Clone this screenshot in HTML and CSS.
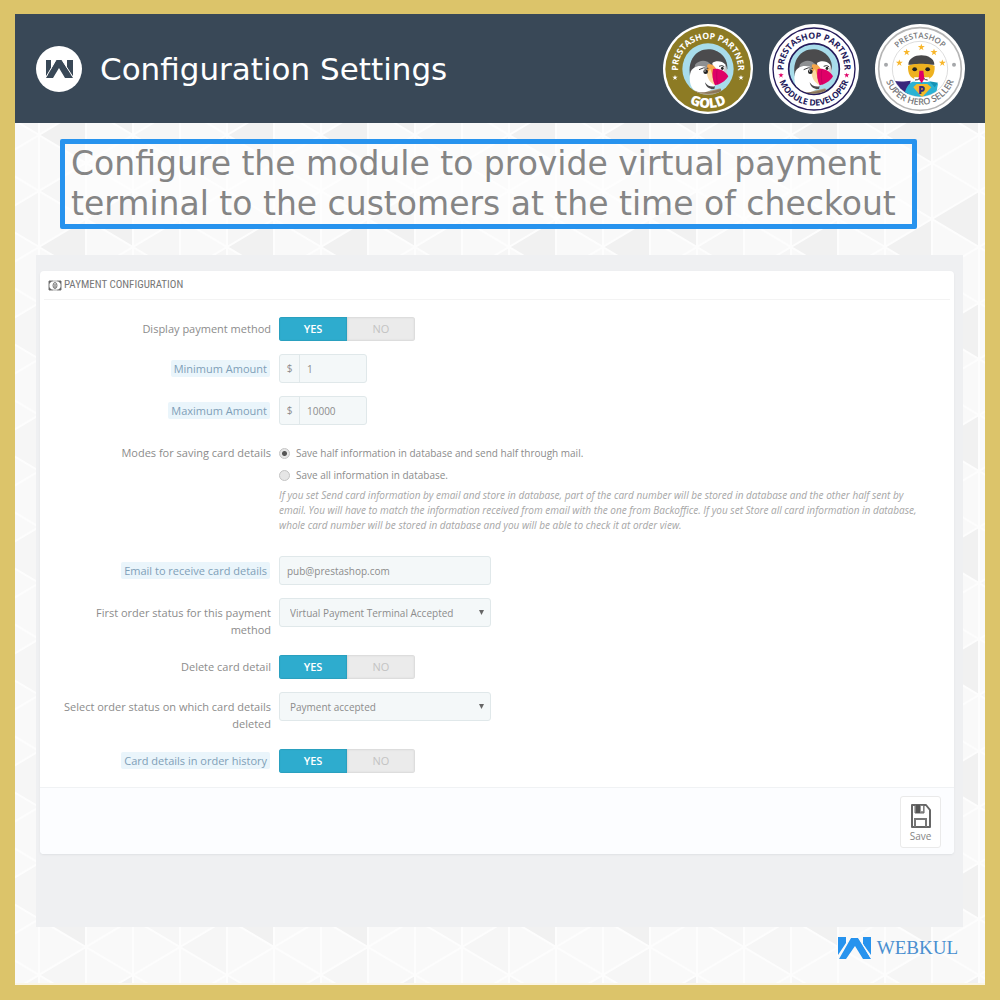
FILE: index.html
```html
<!DOCTYPE html>
<html lang="en">
<head>
<meta charset="utf-8">
<meta name="viewport" content="width=device-width, initial-scale=1">
<title>Configuration Settings</title>
<link rel="stylesheet" href="styles.css">
</head>
<body>
<div class="frame">
  <header class="topbar">
    <svg class="topbar-logo" viewBox="0 0 46 46" aria-hidden="true">
      <circle cx="23" cy="23" r="23" fill="#fff"/>
      <path d="M10 14h5v10l-5 7zM31 14h6v17l-6-8zM10 32l10-18h6l11 18h-8l-6-10-6 10z" fill="#394857"/>
      <path d="M10 31L20 14M37 31L26 14" stroke="#fff" stroke-width="1"/>
    </svg>
    <h1 class="topbar-title">Configuration Settings</h1>
    <div class="badges">
      <svg class="badge" viewBox="8 11 270 270" role="img" aria-label="PrestaShop Partner Gold">
        <defs>
          <path id="gold-top" d="M53 156V146a90 90 0 0 1 180 0V156"/>
          <path id="gold-bottom" d="M26 146a117 117 0 0 0 234 0"/>
          <clipPath id="gold-clip"><circle cx="143" cy="146" r="77"/></clipPath>
          <path id="star" d="M0-8l2 5 6 0-5 4 2 6-5-4-5 4 2-6-5-4 6 0z"/>
          <g id="puffin">
            <path d="M104 205l39 8 38-9 5 26h-86z" fill="#b09a7c"/>
            <path d="M104 207l40 9 38-10-1 9-37 5-40-5z" fill="#897559"/>
            <path d="M89 166c-8-46 18-79 55-79 32 0 58 24 57 58l-13 25-40 20-50 5z" fill="#4b4b4d"/>
            <path d="M105 132c14-16 36-14 48 2l-4 24-50-4z" fill="#8e9092"/>
            <path d="M156 128c8-8 30-8 38 4 6 12 2 32-6 46l-28-16z" fill="#fff"/>
            <path d="M196 134c7 12 4 31-4 40l-4-18z" fill="#c9cbcd"/>
            <path d="M90 158c6-22 34-26 54-14l20 50c-12 24-46 28-64 14-12-12-14-32-10-50z" fill="#fff"/>
            <path d="M134 186c6 10 16 14 30 12l-2 8c-14 2-26-6-28-20z" fill="#4b4b4d"/>
            <path d="M141 133c10-4 22 2 27 14l-2 48c-8-10-31-24-25-62z" fill="#f5a64a"/>
            <path d="M150 146c6 14 8 32 14 48-14-6-24-20-24-36z" fill="#fbd9a0"/>
            <path d="M158 146c16-3 36 4 46 22-10 16-24 24-40 27-7-14-10-32-6-49z" fill="#df0067"/>
            <path d="M170 150c-2 14-1 28 2 42" stroke="#b8005a" stroke-width="2" fill="none"/>
            <path d="M116 148q14-9 28-4M176 138q9-5 16 1" stroke="#3a3a3c" stroke-width="3" fill="none"/>
            <circle cx="136" cy="154" r="7" fill="#222"/><circle cx="134" cy="152" r="2" fill="#fff"/>
            <ellipse cx="186" cy="144" rx="4" ry="5" fill="#222"/>
          </g>
        </defs>
        <circle cx="143" cy="146" r="135" fill="#fff"/>
        <circle cx="143" cy="146" r="128" fill="#8d7b24"/>
        <circle cx="143" cy="146" r="77" fill="#a8dcea"/>
        <g clip-path="url(#gold-clip)"><use href="#puffin"/></g>
        <text class="ring ring-gold" text-anchor="middle"><textPath href="#gold-top" startOffset="50%">PRESTASHOP PARTNER</textPath></text>
        <text class="ring ring-gold-large" text-anchor="middle"><textPath href="#gold-bottom" startOffset="50%">GOLD</textPath></text>
        <use href="#star" x="44" y="172" fill="#fff"/><use href="#star" x="242" y="172" fill="#fff"/>
      </svg>
      <svg class="badge" viewBox="12 11 270 270" role="img" aria-label="PrestaShop Partner Module Developer">
        <defs>
          <path id="dev-top" d="M56 156V146a91 91 0 0 1 182 0V156"/>
          <path id="dev-bottom" d="M37 146a110 110 0 0 0 220 0"/>
          <clipPath id="dev-clip"><circle cx="147" cy="146" r="74"/></clipPath>
        </defs>
        <circle cx="147" cy="146" r="135" fill="#fff"/>
        <circle cx="147" cy="146" r="123" fill="none" stroke="#251b5b" stroke-width="4"/>
        <circle cx="147" cy="146" r="76" fill="#a8dcea" stroke="#251b5b" stroke-width="5"/>
        <g clip-path="url(#dev-clip)"><use href="#puffin"/></g>
        <text class="ring ring-dev" text-anchor="middle"><textPath href="#dev-top" startOffset="50%">PRESTASHOP PARTNER</textPath></text>
        <text class="ring ring-dev" text-anchor="middle"><textPath href="#dev-bottom" startOffset="50%">MODULE DEVELOPER</textPath></text>
        <use href="#star" x="48" y="165" fill="#df0067"/><use href="#star" x="245" y="165" fill="#df0067"/>
      </svg>
      <svg class="badge" viewBox="15 12 270 270" role="img" aria-label="PrestaShop Super Hero Seller">
        <defs>
          <path id="hero-top" d="M58 147a92 92 0 0 1 184 0"/>
          <path id="hero-bottom" d="M42 147a108 108 0 0 0 216 0"/>
          <clipPath id="hero-clip"><circle cx="150" cy="147" r="83"/></clipPath>
        </defs>
        <circle cx="150" cy="147" r="135" fill="#fff"/>
        <circle cx="150" cy="147" r="124" fill="none" stroke="#b5b5b5" stroke-width="5"/>
        <circle cx="150" cy="147" r="83" fill="#fff" stroke="#ccc" stroke-width="2"/>
        <g clip-path="url(#hero-clip)">
          <path d="M70 182c20 4 38 2 52 0l-10 50H80z" fill="#39277c"/>
          <path d="M102 235c2-28 12-44 26-50h50l26 6-8 44z" fill="#2bb2d4"/>
          <path d="M178 184l26 4-10 14z" fill="#1592b5"/>
          <path d="M115 134c0-38 78-38 78 0z" fill="#48484a"/>
          <path d="M114 138c12-9 66-9 80 0 1 24-8 36-22 40h-36c-14-4-23-16-22-40z" fill="#eeb11f"/>
          <path d="M132 172h46l-4 14h-38z" fill="#fff"/>
          <path d="M130 202l10-10h32l12 10-28 30z" fill="#f5b92b"/>
          <path d="M148 152h12l3 24-8 14-9-14z" fill="#df0067"/>
          <ellipse cx="134" cy="148" rx="7" ry="6" fill="#222"/><ellipse cx="173" cy="148" rx="7" ry="6" fill="#222"/>
          <path d="M135 180q10 0 13-4M162 176q4 4 11 4" fill="none" stroke="#333" stroke-width="3"/>
        </g>
        <text class="hero-letter" x="155" y="221" text-anchor="middle">P</text>
        <g fill="#f8b62b">
          <use href="#star" transform="translate(154 82) scale(1.3)"/>
          <use href="#star" transform="translate(110 97) scale(1.3)"/>
          <use href="#star" transform="translate(192 97) scale(1.3)"/>
          <use href="#star" transform="translate(88 129) scale(1.3)"/>
          <use href="#star" transform="translate(217 129) scale(1.3)"/>
        </g>
        <circle cx="48" cy="134" r="6" fill="#a6a8ab"/><circle cx="252" cy="134" r="6" fill="#a6a8ab"/>
        <text class="ring ring-hero" text-anchor="middle"><textPath href="#hero-top" startOffset="50%">PRESTASHOP</textPath></text>
        <text class="ring ring-hero ring-hero-large" text-anchor="middle"><textPath href="#hero-bottom" startOffset="50%">SUPER HERO SELLER</textPath></text>
      </svg>
    </div>
  </header>

  <main class="content">
    <p class="intro">Configure the module to provide virtual payment<br>terminal to the customers at the time of checkout</p>

    <section class="backdrop">
      <form class="panel">
        <h2 class="panel-title">
          <svg class="money-icon" viewBox="0 0 14 11" aria-hidden="true">
            <path d="M5 1H1v3M1 7v3h4M9 1h4v3M13 7v3H9M1 4v3M13 4v3" fill="none" stroke="#777" stroke-width="1"/>
            <path d="M5 1h4M5 10h4" stroke="#aaa"/>
            <path d="M1 1h3L1 4zM13 1h-3l3 3zM1 10h3L1 7zM13 10h-3l3-3z" fill="#666"/>
            <ellipse cx="7" cy="5.500" rx="2" ry="3" fill="#ddd" stroke="#777" stroke-width="1"/>
            <path d="M7 4v4" fill="none" stroke="#777" stroke-width="1"/>
          </svg>PAYMENT CONFIGURATION</h2>

        <div class="fields">
          <div class="row row-switch">
            <div class="label" id="l-display">Display payment method</div>
            <div class="switch" role="radiogroup" aria-labelledby="l-display">
              <label><input type="radio" name="display" checked><span>YES</span></label>
              <label><input type="radio" name="display"><span>NO</span></label>
            </div>
          </div>
          <div class="row">
            <label class="label" for="min"><span class="hint">Minimum Amount</span></label>
            <div class="money"><span>$</span><input type="text" id="min" value="1"></div>
          </div>
          <div class="row">
            <label class="label" for="max"><span class="hint">Maximum Amount</span></label>
            <div class="money"><span>$</span><input type="text" id="max" value="10000"></div>
          </div>
          <div class="row row-modes">
            <div class="label" id="l-modes">Modes for saving card details</div>
            <div class="modes" role="radiogroup" aria-labelledby="l-modes">
              <label class="mode"><input type="radio" name="mode" checked>Save half information in database and send half through mail.</label>
              <label class="mode"><input type="radio" name="mode">Save all information in database.</label>
              <p class="help">If you set Send card information by email and store in database, part of the card number will be stored in database and the other half sent by email. You will have to match the information received from email with the one from Backoffice. If you set Store all card information in database, whole card number will be stored in database and you will be able to check it at order view.</p>
            </div>
          </div>
          <div class="row">
            <label class="label" for="email"><span class="hint">Email to receive card details</span></label>
            <input class="control" type="text" id="email" value="pub@prestashop.com">
          </div>
          <div class="row">
            <label class="label" for="first">First order status for this payment method</label>
            <select class="control" id="first"><option>Virtual Payment Terminal Accepted</option></select>
          </div>
          <div class="row row-switch">
            <div class="label" id="l-delete">Delete card detail</div>
            <div class="switch" role="radiogroup" aria-labelledby="l-delete">
              <label><input type="radio" name="delete" checked><span>YES</span></label>
              <label><input type="radio" name="delete"><span>NO</span></label>
            </div>
          </div>
          <div class="row">
            <label class="label" for="deleted">Select order status on which card details deleted</label>
            <select class="control" id="deleted"><option>Payment accepted</option></select>
          </div>
          <div class="row row-switch">
            <div class="label" id="l-history"><span class="hint">Card details in order history</span></div>
            <div class="switch" role="radiogroup" aria-labelledby="l-history">
              <label><input type="radio" name="history" checked><span>YES</span></label>
              <label><input type="radio" name="history"><span>NO</span></label>
            </div>
          </div>
        </div>

        <div class="panel-footer">
          <button class="save" type="button">
            <svg viewBox="0 0 22 24" aria-hidden="true">
              <path d="M2 1h14l4 5v17H2z" fill="#fff" stroke="#666" stroke-width="2" stroke-linejoin="round"/>
              <path d="M5 1h9v8H5z" fill="#999" stroke="#666"/>
              <path d="M6 1h4v8H6z" fill="#555"/><path d="M11 2h2v5h-2z" fill="#fff"/>
              <path d="M5 23v-8h11v8" fill="none" stroke="#777" stroke-width="2"/>
            </svg>
            <span>Save</span>
          </button>
        </div>
      </form>
    </section>
  </main>

  <footer class="brand">
    <svg class="brand-mark" viewBox="0 0 33 22" aria-hidden="true">
      <path d="M0 0h8v6L0 18zM25 0h8v18l-8-11zM1 22L13 1h7l13 21h-8l-8-13-9 13z" fill="#2793ee"/>
      <path d="M0 21L12 1M33 21L21 1" stroke="#f8f8f8" stroke-width="1"/>
    </svg>
    <span>WEBKUL</span>
  </footer>
</div>
</body>
</html>
```
FILE: styles.css
```css
* { box-sizing: border-box; }

body {
  margin: 0;
  font-family: "Open Sans", "Noto Sans", sans-serif;
  font-size: 11px;
  color: #8c8c8c;
}

.frame {
  min-height: 100vh;
  display: flex;
  flex-direction: column;
  border: 15px solid #dcc46a;
  border-top-width: 14px;
  background-color: #f9f9f9;
  background-image: url("data:image/svg+xml,%3Csvg xmlns='http://www.w3.org/2000/svg' width='282' height='112'%3E%3Cg fill='%23f1f1f1'%3E%3Cpath d='M0 56L47 28V84zM188 56L235 28V84zM94 0L47 28L94 56z'/%3E%3C/g%3E%3Cg fill='%23f6f6f6'%3E%3Cpath d='M94 56L141 28V84zM235 28L188 0L188 56zM0 0L47 28V-28zM0 112L47 140V84zM141 84L188 56V112zM282 0L235 28L282 56z'/%3E%3C/g%3E%3Cpath d='M0 0L188 112M0 56L94 112M94 0L282 112M188 0L282 56M0 56L94 0M0 112L188 0M94 112L282 0M188 112L282 56M0 0V112M47 0V112M94 0V112M141 0V112M188 0V112M235 0V112M282 0V112' fill='none' stroke='%23fdfdfd' stroke-width='2'/%3E%3C/svg%3E");
  background-position: 24px 65px;
}

.topbar {
  display: flex;
  align-items: center;
  min-height: 109px;
  padding: 0 20px 0 21px;
  background: #394857;
}

.topbar-logo { width: 46px; height: 46px; flex: none; }

.topbar-title {
  flex: 1;
  margin: 0 0 0 18px;
  font: 400 31px/40px "DejaVu Sans", sans-serif;
  color: #fff;
}

.badges { display: flex; gap: 16px; }
.badge { width: 90px; height: 90px; }
.ring { font-family: "Open Sans", sans-serif; font-weight: 700; font-size: 26px; }
.ring-gold { fill: #fff; }
.ring-gold-large { fill: #fff; font-size: 41px; font-weight: 800; }
.ring-dev { fill: #251b5b; }
.ring-hero { fill: #77787b; font-weight: 600; font-size: 24px; }
.ring-hero-large { font-size: 27px; }
.hero-letter { font: 800 32px "Open Sans", sans-serif; fill: #39277c; }

.content { padding: 16px 22px 0 21px; }

.intro {
  width: fit-content;
  margin: 0 0 26px 24px;
  padding: 0 16px 0 6px;
  border: 5px solid #2793ee;
  border-radius: 2px;
  background: rgba(255, 255, 255, .5);
  font: 400 33px/40px "DejaVu Sans", sans-serif;
  color: #858585;
}

.backdrop {
  padding: 16px 9px 73px 4px;
  background: #eff0f2;
}

.panel {
  border-radius: 4px;
  background: #fff;
  box-shadow: 0 1px 2px #dfe1e4;
}

.panel-title {
  display: flex;
  align-items: center;
  gap: 2px;
  height: 29px;
  margin: 0 4px;
  padding: 0 4px;
  border-bottom: 1px solid #f3f3f3;
  font: 400 11px/28px "Liberation Sans Narrow", "Roboto Condensed", sans-serif;
  color: #777;
}

.money-icon { width: 14px; height: 11px; }

.fields {
  display: flex;
  flex-direction: column;
  gap: 13px;
  padding: 14px 24px 14px 20px;
}

.row {
  display: grid;
  grid-template-columns: 211px 1fr;
  gap: 8px;
  align-items: start;
}

.row-switch .switch { margin-top: 3px; }
.row-modes { padding-bottom: 10px; }

.label {
  padding: 6px 0 1px;
  line-height: 17px;
  text-align: right;
}

.hint {
  display: inline-block;
  padding: 0 3px;
  margin-right: 1px;
  border-radius: 2px;
  background: #eaf5fb;
  color: #7f9fb8;
}

.switch {
  display: flex;
  width: 136px;
  height: 24px;
  border-radius: 3px;
  overflow: hidden;
}

.switch label { flex: 1; position: relative; }
.switch input { position: absolute; inset: 0; margin: 0; opacity: 0; }
.switch span {
  display: block;
  height: 24px;
  line-height: 24px;
  text-align: center;
  color: #c3c3c3;
  background: #ebebeb;
  box-shadow: inset 0 0 2px 1px #d8d8d8;
}
.switch input:checked + span {
  background: #2eacce;
  color: #fff;
  font-weight: 600;
  box-shadow: inset 0 0 1px 1px #2b9fbe;
}

.control, .money {
  height: 29px;
  border: 1px solid #e0e8ea;
  border-radius: 3px;
  background: #f4f8f9;
}

.control {
  width: 212px;
  padding: 0 7px;
  font: 400 10px "Open Sans", sans-serif;
  color: #8c8c8c;
}

select.control {
  appearance: none;
  padding: 0 10px;
  background: #f4f8f9 url("data:image/svg+xml,%3Csvg xmlns='http://www.w3.org/2000/svg' width='5' height='5'%3E%3Cpath d='M0 0H5L2.5 5z' fill='%23666'/%3E%3C/svg%3E") no-repeat right 6px center;
}

.money { display: flex; width: 88px; }
.money span {
  width: 20px;
  border-right: 1px solid #e0e8ea;
  font-size: 10px;
  line-height: 27px;
  text-align: center;
}
.money input {
  flex: 1;
  min-width: 0;
  padding: 0 7px;
  border: 0;
  background: none;
  font: 400 10px "Open Sans", sans-serif;
  color: #8c8c8c;
}

.modes { padding-top: 4px; font-size: 10px; }
.mode { display: flex; align-items: center; gap: 6px; line-height: 22px; }
.mode input {
  appearance: none;
  width: 11px;
  height: 11px;
  margin: 0;
  border: 1px solid #c4c4c4;
  border-radius: 50%;
  background: #e6e6e6;
}
.mode input:checked { background: radial-gradient(circle, #555 0 2px, #e6e6e6 3px); }

.help {
  margin: 2px 0 0;
  line-height: 15px;
  font-style: italic;
  color: #a6a6a6;
}

.panel-footer {
  display: flex;
  justify-content: flex-end;
  padding: 8px 13px 6px;
  border-top: 1px solid #f0f2f4;
  border-radius: 0 0 4px 4px;
  background: #fcfdff;
}

.save {
  display: flex;
  flex-direction: column;
  align-items: center;
  width: 41px;
  height: 52px;
  padding: 7px 0 0;
  border: 1px solid #eaeaea;
  border-radius: 3px;
  background: #fff;
  font: 400 10px/16px "Open Sans", sans-serif;
  color: #858585;
}
.save svg { width: 22px; height: 24px; }

.brand {
  display: flex;
  flex: 1;
  align-items: center;
  justify-content: flex-end;
  gap: 6px;
  padding: 0 27px 15px 0;
  border-bottom: 2px solid #fbf6e6;
  font: 400 19px/22px "Liberation Serif", serif;
  color: #4a8fd0;
}
.brand-mark { width: 33px; height: 22px; }
```
